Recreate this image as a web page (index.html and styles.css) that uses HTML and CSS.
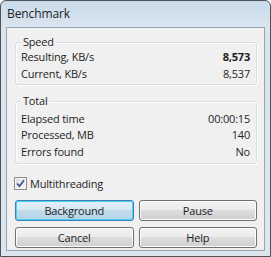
FILE: index.html
```html
<!DOCTYPE html>
<html>
<head>
<meta charset="utf-8">
<link rel="stylesheet" href="styles.css">
</head>
<body>
<div class="window">
  <div class="titlebar"><span class="title">Benchmark</span></div>
  <div class="client">
    <div class="group group-speed">
      <span class="legend">Speed</span>
      <div class="row"><span>Resulting, KB/s</span><span class="bold">8,573</span></div>
      <div class="row"><span>Current, KB/s</span><span>8,537</span></div>
    </div>
    <div class="group group-total">
      <span class="legend">Total</span>
      <div class="row"><span>Elapsed time</span><span>00:00:15</span></div>
      <div class="row"><span>Processed, MB</span><span>140</span></div>
      <div class="row"><span>Errors found</span><span>No</span></div>
    </div>
    <label class="check">
      <span class="box"><svg width="9" height="9" viewBox="0 0 9 9"><path d="M1 4.5 L3.5 7.2 L8 1.2" fill="none" stroke="#3d5190" stroke-width="1.7"/></svg></span>
      <span>Multithreading</span>
    </label>
    <div class="buttons">
      <button class="btn default">Background</button>
      <button class="btn">Pause</button>
      <button class="btn">Cancel</button>
      <button class="btn">Help</button>
    </div>
  </div>
</div>
</body>
</html>
```
FILE: styles.css
```css
html, body {
  margin: 0;
  padding: 0;
  background: #ffffff;
}
body {
  width: 271px;
  height: 257px;
  font-family: "Open Sans", "Noto Sans", sans-serif;
  font-size: 11px;
  letter-spacing: -0.2px;
  color: #1e1e1e;
}
.window {
  box-sizing: border-box;
  width: 271px;
  height: 257px;
  border: 1px solid #4d5259;
  border-radius: 6px 6px 0 0;
  background: linear-gradient(#c9dbea, #d9e5ef 26px, #dce6ef);
  display: flex;
  flex-direction: column;
  padding: 0 5px 5px 5px;
}
.titlebar {
  height: 26px;
  display: flex;
  align-items: center;
  padding-left: 1px;
}
.title {
  font-size: 12px;
  letter-spacing: -0.1px;
  color: #1e1e1e;
  margin-top: -2px;
}
.client {
  flex: 1;
  border: 1px solid #97a6b5;
  background: #f0f0f0;
  padding: 14px 7px 0 8px;
  display: flex;
  flex-direction: column;
}
.group {
  position: relative;
  border: 1px solid #d5dfe5;
  border-radius: 3px;
  box-shadow: inset 1px 1px 0 #ffffff, 1px 1px 0 #ffffff;
  padding: 5px 6px 2px 5px;
}
.group-total {
  margin-top: 16px;
  padding-top: 8px;
  padding-bottom: 3px;
}
.group-total .row {
  height: 16.5px;
}
.legend {
  position: absolute;
  top: -9px;
  left: 5px;
  padding: 0 2px;
  background: #f0f0f0;
  line-height: 16px;
}
.row {
  height: 17px;
  display: flex;
  justify-content: space-between;
  align-items: center;
}
.bold {
  font-weight: bold;
}
.check {
  display: flex;
  align-items: center;
  gap: 3px;
  margin-top: 13px;
  margin-left: -1px;
  height: 13px;
}
.box {
  box-sizing: border-box;
  width: 13px;
  height: 13px;
  border: 1px solid #8e8f8f;
  background: linear-gradient(135deg, #dcdcdc, #fbfbfb);
  box-shadow: inset 0 0 0 1px #f4f4f4;
  display: flex;
  align-items: center;
  justify-content: center;
}
.buttons {
  margin-top: 10px;
  display: grid;
  grid-template-columns: 1fr 1fr;
  column-gap: 5px;
  row-gap: 6px;
}
.btn {
  height: 21px;
  font-family: "Open Sans", "Noto Sans", sans-serif;
  font-size: 11px;
  letter-spacing: -0.2px;
  color: #1e1e1e;
  border: 1px solid #707070;
  border-radius: 3px;
  background: linear-gradient(#f2f2f2, #ebebeb 50%, #dddddd 50%, #cfcfcf);
  box-shadow: inset 0 0 0 1px #fcfcfc;
  padding: 0;
}
.btn.default {
  border-color: #3c7fb1;
  background: linear-gradient(#e3f0f8, #d6e8f4 50%, #c2dcec 50%, #b5d3e6);
  box-shadow: inset 0 0 0 1px #48d3f9;
}
```
